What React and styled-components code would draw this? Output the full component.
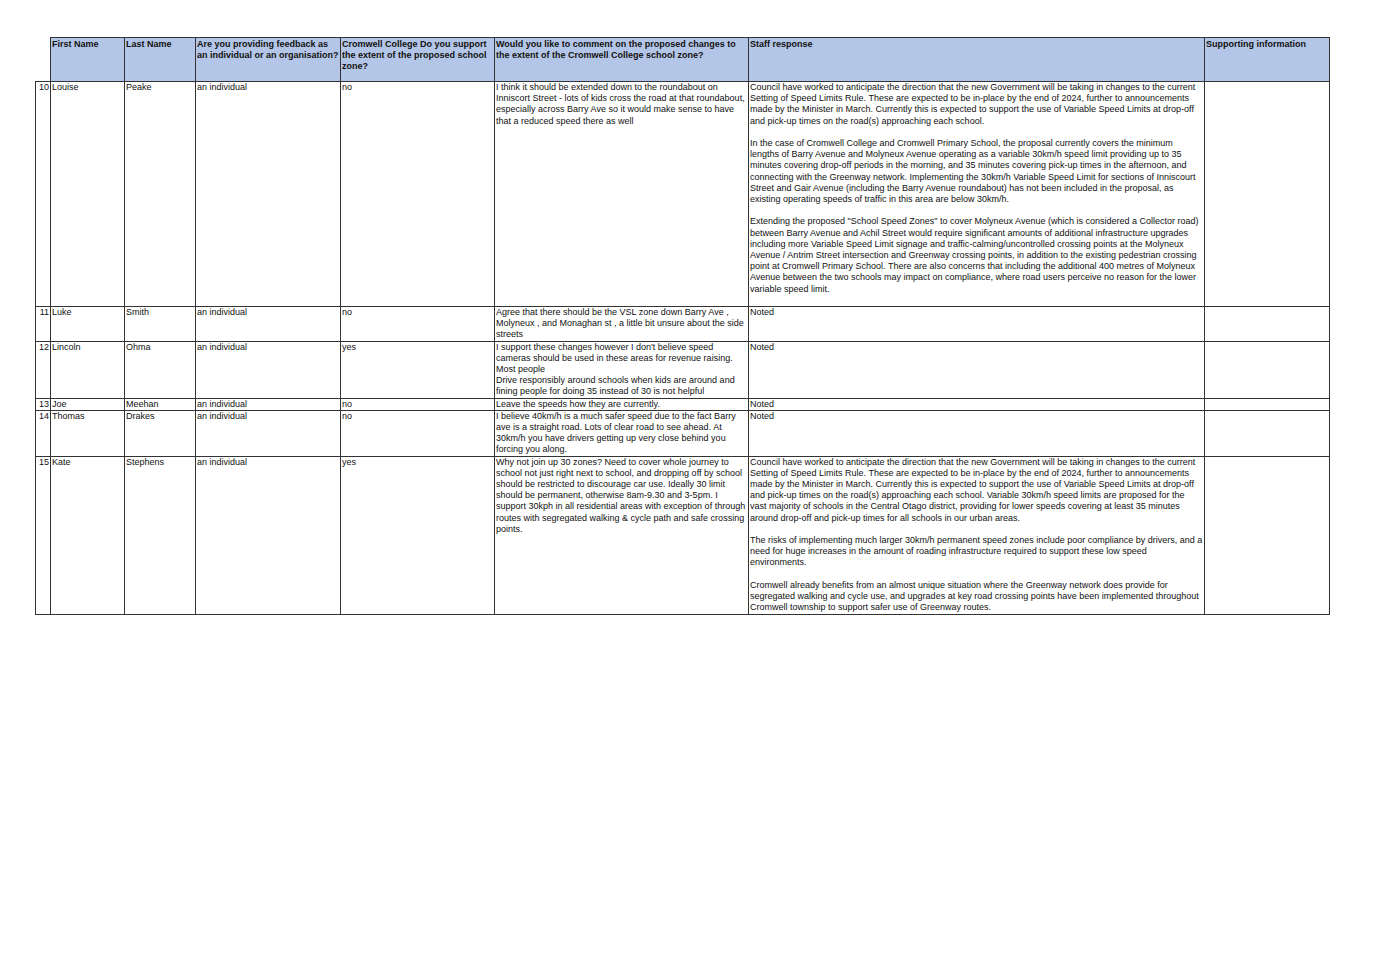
import React from "react";
import styled, { createGlobalStyle } from "styled-components";

const G = createGlobalStyle`
  body { margin:0; background:#fff; font-family:"Liberation Sans", Arial, sans-serif; }
`;
const Page = styled.div`padding:37px 0 0 35px;`;
const Table = styled.table`
  border-collapse:collapse; table-layout:fixed; width:1294px;
  font-size:9px; line-height:11.2px; color:#111;
`;
const Th = styled.th`
  background:${p => (p.$blank ? "#fff" : "#b4c6e7")};
  border:${p => (p.$blank ? "none" : "1px solid #333")};
  border-bottom:1px solid #333;
  text-align:left; vertical-align:top; font-weight:bold; padding:1px 1px; height:41px;
`;
const Td = styled.td`
  border:1px solid #333; vertical-align:top; padding:0 1px;
  text-align:${p => (p.$num ? "right" : "left")};
  white-space:pre-line;
`;
const Tr = styled.tr`height:${p => p.$h}px;`;

const widths = [15, 74, 71, 145, 154, 254, 456, 125];
const heads = ["", "First Name", "Last Name", "Are you providing feedback as an individual or an organisation?", "Cromwell College Do you support the extent of the proposed school zone?", "Would you like to comment on the proposed changes to the extent of the Cromwell College school zone?", "Staff response", "Supporting information"];

const s1 = `Council have worked to anticipate the direction that the new Government will be taking in changes to the current Setting of Speed Limits Rule. These are expected to be in-place by the end of 2024, further to announcements made by the Minister in March. Currently this is expected to support the use of Variable Speed Limits at drop-off and pick-up times on the road(s) approaching each school.

In the case of Cromwell College and Cromwell Primary School, the proposal currently covers the minimum lengths of Barry Avenue and Molyneux Avenue operating as a variable 30km/h speed limit providing up to 35 minutes covering drop-off periods in the morning, and 35 minutes covering pick-up times in the afternoon, and connecting with the Greenway network. Implementing the 30km/h Variable Speed Limit for sections of Inniscourt Street and Gair Avenue (including the Barry Avenue roundabout) has not been included in the proposal, as existing operating speeds of traffic in this area are below 30km/h.

Extending the proposed "School Speed Zones" to cover Molyneux Avenue (which is considered a Collector road) between Barry Avenue and Achil Street would require significant amounts of additional infrastructure upgrades including more Variable Speed Limit signage and traffic-calming/uncontrolled crossing points at the Molyneux Avenue / Antrim Street intersection and Greenway crossing points, in addition to the existing pedestrian crossing point at Cromwell Primary School. There are also concerns that including the additional 400 metres of Molyneux Avenue between the two schools may impact on compliance, where road users perceive no reason for the lower variable speed limit.`;

const s2 = `Council have worked to anticipate the direction that the new Government will be taking in changes to the current Setting of Speed Limits Rule. These are expected to be in-place by the end of 2024, further to announcements made by the Minister in March. Currently this is expected to support the use of Variable Speed Limits at drop-off and pick-up times on the road(s) approaching each school. Variable 30km/h speed limits are proposed for the vast majority of schools in the Central Otago district, providing for lower speeds covering at least 35 minutes around drop-off and pick-up times for all schools in our urban areas.

The risks of implementing much larger 30km/h permanent speed zones include poor compliance by drivers, and a need for huge increases in the amount of roading infrastructure required to support these low speed environments.

Cromwell already benefits from an almost unique situation where the Greenway network does provide for segregated walking and cycle use, and upgrades at key road crossing points have been implemented throughout Cromwell township to support safer use of Greenway routes.`;

const rows = [
  [225, "10", "Louise", "Peake", "an individual", "no", "I think it should be extended down to the roundabout on Inniscort Street - lots of kids cross the road at that roundabout, especially across Barry Ave so it would make sense to have that a reduced speed there as well", s1],
  [34, "11", "Luke", "Smith", "an individual", "no", "Agree that there should be the VSL zone down Barry Ave , Molyneux , and Monaghan st ,  a little bit unsure about the side streets", "Noted"],
  [56, "12", "Lincoln", "Ohma", "an individual", "yes", "I support these changes however I don't believe speed cameras should be used in these areas for revenue raising. Most people\nDrive responsibly around schools when kids are around and fining people for doing 35 instead of 30 is not helpful", "Noted"],
  [11, "13", "Joe", "Meehan", "an individual", "no", "Leave the speeds how they are currently.", "Noted"],
  [45, "14", "Thomas", "Drakes", "an individual", "no", "I believe 40km/h is a much safer speed due to the fact Barry ave is a straight road. Lots of clear road to see ahead. At 30km/h you have drivers getting up very close behind you forcing you along.", "Noted"],
  [158, "15", "Kate", "Stephens", "an individual", "yes", "Why not join up 30 zones? Need to cover whole journey to school not just right next to school, and dropping off by school should be restricted to discourage car use. Ideally 30 limit should be permanent, otherwise 8am-9.30 and 3-5pm. I support 30kph in all residential areas with exception of through routes with segregated walking & cycle path and safe crossing points.", s2],
];

export default function App() {
  return (
    <Page>
      <G />
      <Table>
        <colgroup>{widths.map((w, i) => <col key={i} style={{ width: w }} />)}</colgroup>
        <thead>
          <tr>{heads.map((h, i) => <Th key={i} $blank={i === 0}>{h}</Th>)}</tr>
        </thead>
        <tbody>
          {rows.map(([h, ...c], r) => (
            <Tr key={r} $h={h}>
              {c.map((t, i) => <Td key={i} $num={i === 0}>{t}{i === 7 ? "" : ""}</Td>)}
              <Td />
            </Tr>
          ))}
        </tbody>
      </Table>
    </Page>
  );
}
